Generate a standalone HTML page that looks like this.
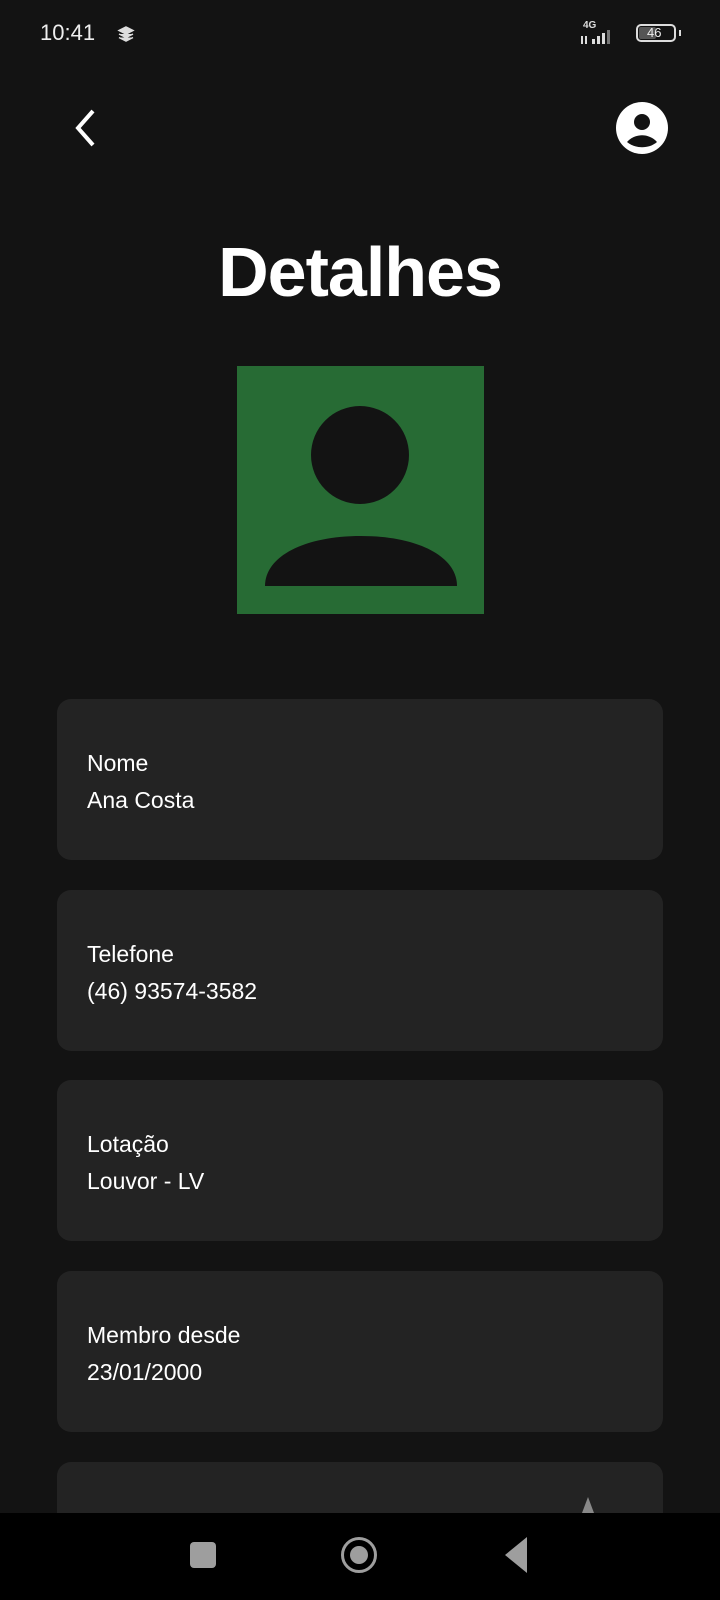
<!DOCTYPE html>
<html style="height:1600px;overflow:hidden"><head><meta charset="utf-8"><style>
html,body{margin:0;padding:0}
body{width:720px;height:1600px;background:#131313;position:relative;overflow:hidden;font-family:"Liberation Sans",sans-serif;color:#fff}
.abs{position:absolute}
.card{position:absolute;left:57px;width:606px;height:161px;background:#232323;border-radius:14px}
.card .l{position:absolute;left:30px;top:46px;font-size:23px;line-height:37px}
</style></head><body>
<div class="abs" style="left:40px;top:20px;font-size:22px;color:#eee">10:41</div>
<svg class="abs" style="left:117px;top:26px" width="18" height="16" viewBox="0 0 18 16"><path d="M9 1L16 4.5 9 8 2 4.5Z M2 8l7 3.5 7-3.5 M2 11.5l7 3.5 7-3.5" fill="#ddd" stroke="#ddd" stroke-width="1.5"/></svg>
<div class="abs" style="left:583px;top:20px;font-size:10px;font-weight:bold;color:#ddd">4G</div>
<svg class="abs" style="left:580px;top:30px" width="48" height="16"><rect x="12" y="9" width="3" height="5" fill="#ddd"/><rect x="17" y="6" width="3" height="8" fill="#ddd"/><rect x="22" y="3" width="3" height="11" fill="#ddd"/><rect x="27" y="0" width="3" height="14" fill="#777"/><path d="M2 6v8M6 6v8" stroke="#ddd" stroke-width="2"/></svg>
<div class="abs" style="left:636px;top:24px;width:40px;height:18px;border:2px solid #ddd;border-radius:5px;box-sizing:border-box"><div style="position:absolute;left:1px;top:1px;width:17px;height:12px;background:#555;border-radius:2px"></div><div style="position:absolute;left:9px;top:-1px;font-size:13px;color:#eee">46</div></div>
<div class="abs" style="left:679px;top:30px;width:2px;height:6px;background:#ddd"></div>
<svg class="abs" style="left:70px;top:108px" width="30" height="40"><path d="M23 3L8 20l15 17" fill="none" stroke="#fff" stroke-width="4"/></svg>
<svg class="abs" style="left:616px;top:102px" width="52" height="52" viewBox="0 0 52 52"><circle cx="26" cy="26" r="26" fill="#fff"/><circle cx="26" cy="20" r="8" fill="#131313"/><path d="M11 40c8-9 22-9 30 0c-8 7-22 7-30 0z" fill="#131313"/></svg>
<div class="abs" style="left:0;width:720px;top:232px;text-align:center;font-size:70px;font-weight:bold;letter-spacing:-1px">Detalhes</div>
<div class="abs" style="left:237px;top:366px;width:247px;height:248px;background:#276b34"></div>
<svg class="abs" style="left:237px;top:366px" width="247" height="248"><circle cx="123" cy="89" r="49" fill="#131313"/><path d="M28 220c0-30 40-50 96-50s96 20 96 50z" fill="#131313"/></svg>
<div class="card" style="top:699px"><div class="l">Nome<br>Ana Costa</div></div>
<div class="card" style="top:890px"><div class="l">Telefone<br>(46) 93574-3582</div></div>
<div class="card" style="top:1080px"><div class="l">Lotação<br>Louvor - LV</div></div>
<div class="card" style="top:1271px"><div class="l">Membro desde<br>23/01/2000</div></div>
<div class="card" style="top:1462px;height:138px;border-radius:14px 14px 0 0"></div>
<svg class="abs" style="left:578px;top:1495px" width="20" height="20"><path d="M10 2L4 18h12z" fill="#888"/></svg>
<div class="abs" style="left:0;top:1513px;width:720px;height:87px;background:#000"></div>
<div class="abs" style="left:190px;top:1542px;width:26px;height:26px;background:#9e9e9e;border-radius:4px"></div>
<div class="abs" style="left:341px;top:1537px;width:30px;height:30px;border:3px solid #9e9e9e;border-radius:50%"></div>
<div class="abs" style="left:350px;top:1546px;width:18px;height:18px;background:#9e9e9e;border-radius:50%"></div>
<svg class="abs" style="left:502px;top:1536px" width="28" height="40"><path d="M25 1v36L3 19z" fill="#9e9e9e"/></svg>
</body></html>
